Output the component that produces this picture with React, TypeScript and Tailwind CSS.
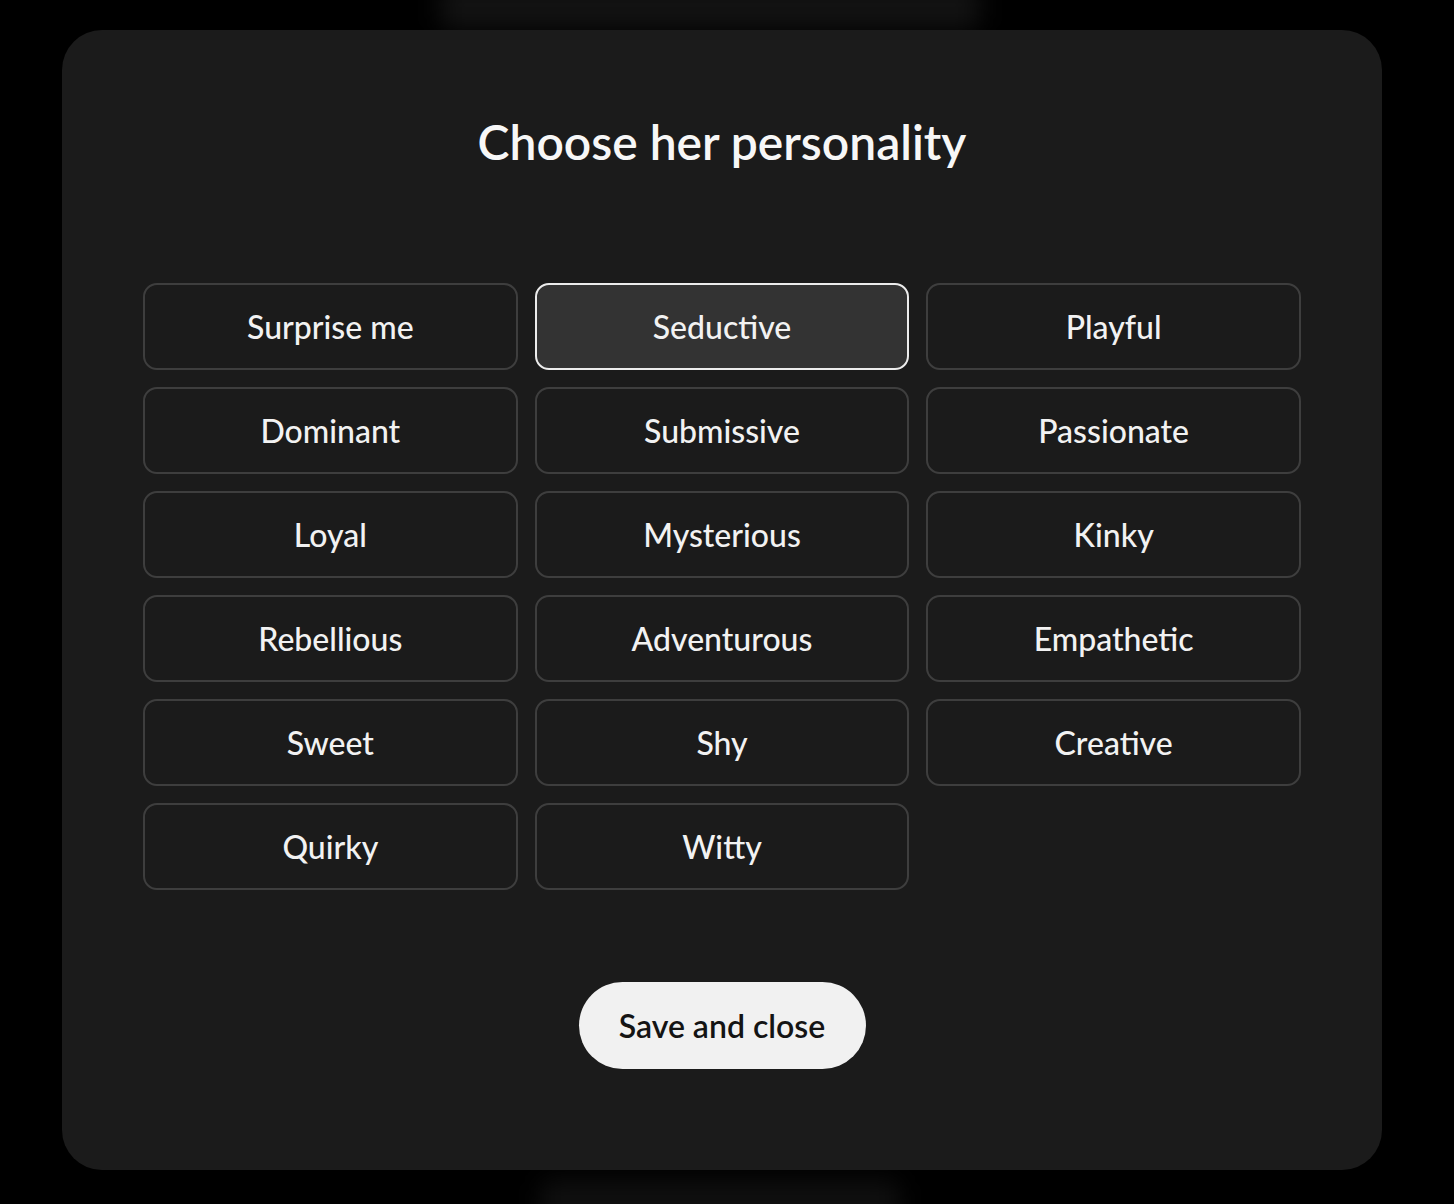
const traits = [
  "Surprise me",
  "Seductive",
  "Playful",
  "Dominant",
  "Submissive",
  "Passionate",
  "Loyal",
  "Mysterious",
  "Kinky",
  "Rebellious",
  "Adventurous",
  "Empathetic",
  "Sweet",
  "Shy",
  "Creative",
  "Quirky",
  "Witty",
];

export default function App() {
  const selected = "Seductive";

  return (
    <div className="relative min-h-[1204px] w-full overflow-hidden bg-black pt-[30px] font-['Lato',sans-serif]">
      {/* blurred page content behind the modal */}
      <div className="pointer-events-none absolute left-[440px] top-[-20px] h-[50px] w-[540px] rounded-xl bg-[#121212] blur-md" />
      <div className="pointer-events-none absolute left-[540px] top-[1180px] h-[50px] w-[360px] rounded-xl bg-[#0f0f0f] blur-md" />

      <div className="relative ml-[62px] flex h-[1140px] w-[1320px] flex-col items-center rounded-[40px] bg-[#1b1b1b] px-[81px] pt-[83px]">
        <h2 className="text-[48px] font-semibold leading-[58px] text-[#f7f7f7]">
          Choose her personality
        </h2>

        <div className="mt-[112px] grid w-full grid-cols-3 gap-[17px]">
          {traits.map((t) => (
            <button
              key={t}
              className={
                t === selected
                  ? "flex h-[87px] items-center justify-center rounded-[14px] border-2 border-[#ececec] bg-[#333333] text-[32px] font-medium text-[#f2f2f2]"
                  : "flex h-[87px] items-center justify-center rounded-[14px] border-2 border-[#3e3e3e] bg-transparent text-[32px] font-medium text-[#f2f2f2]"
              }
            >
              {t}
            </button>
          ))}
        </div>

        <button className="mt-[92px] flex h-[87px] w-[287px] items-center justify-center rounded-full bg-[#f1f1f1] text-[32px] font-semibold text-[#141414]">
          Save and close
        </button>
      </div>
    </div>
  );
}
